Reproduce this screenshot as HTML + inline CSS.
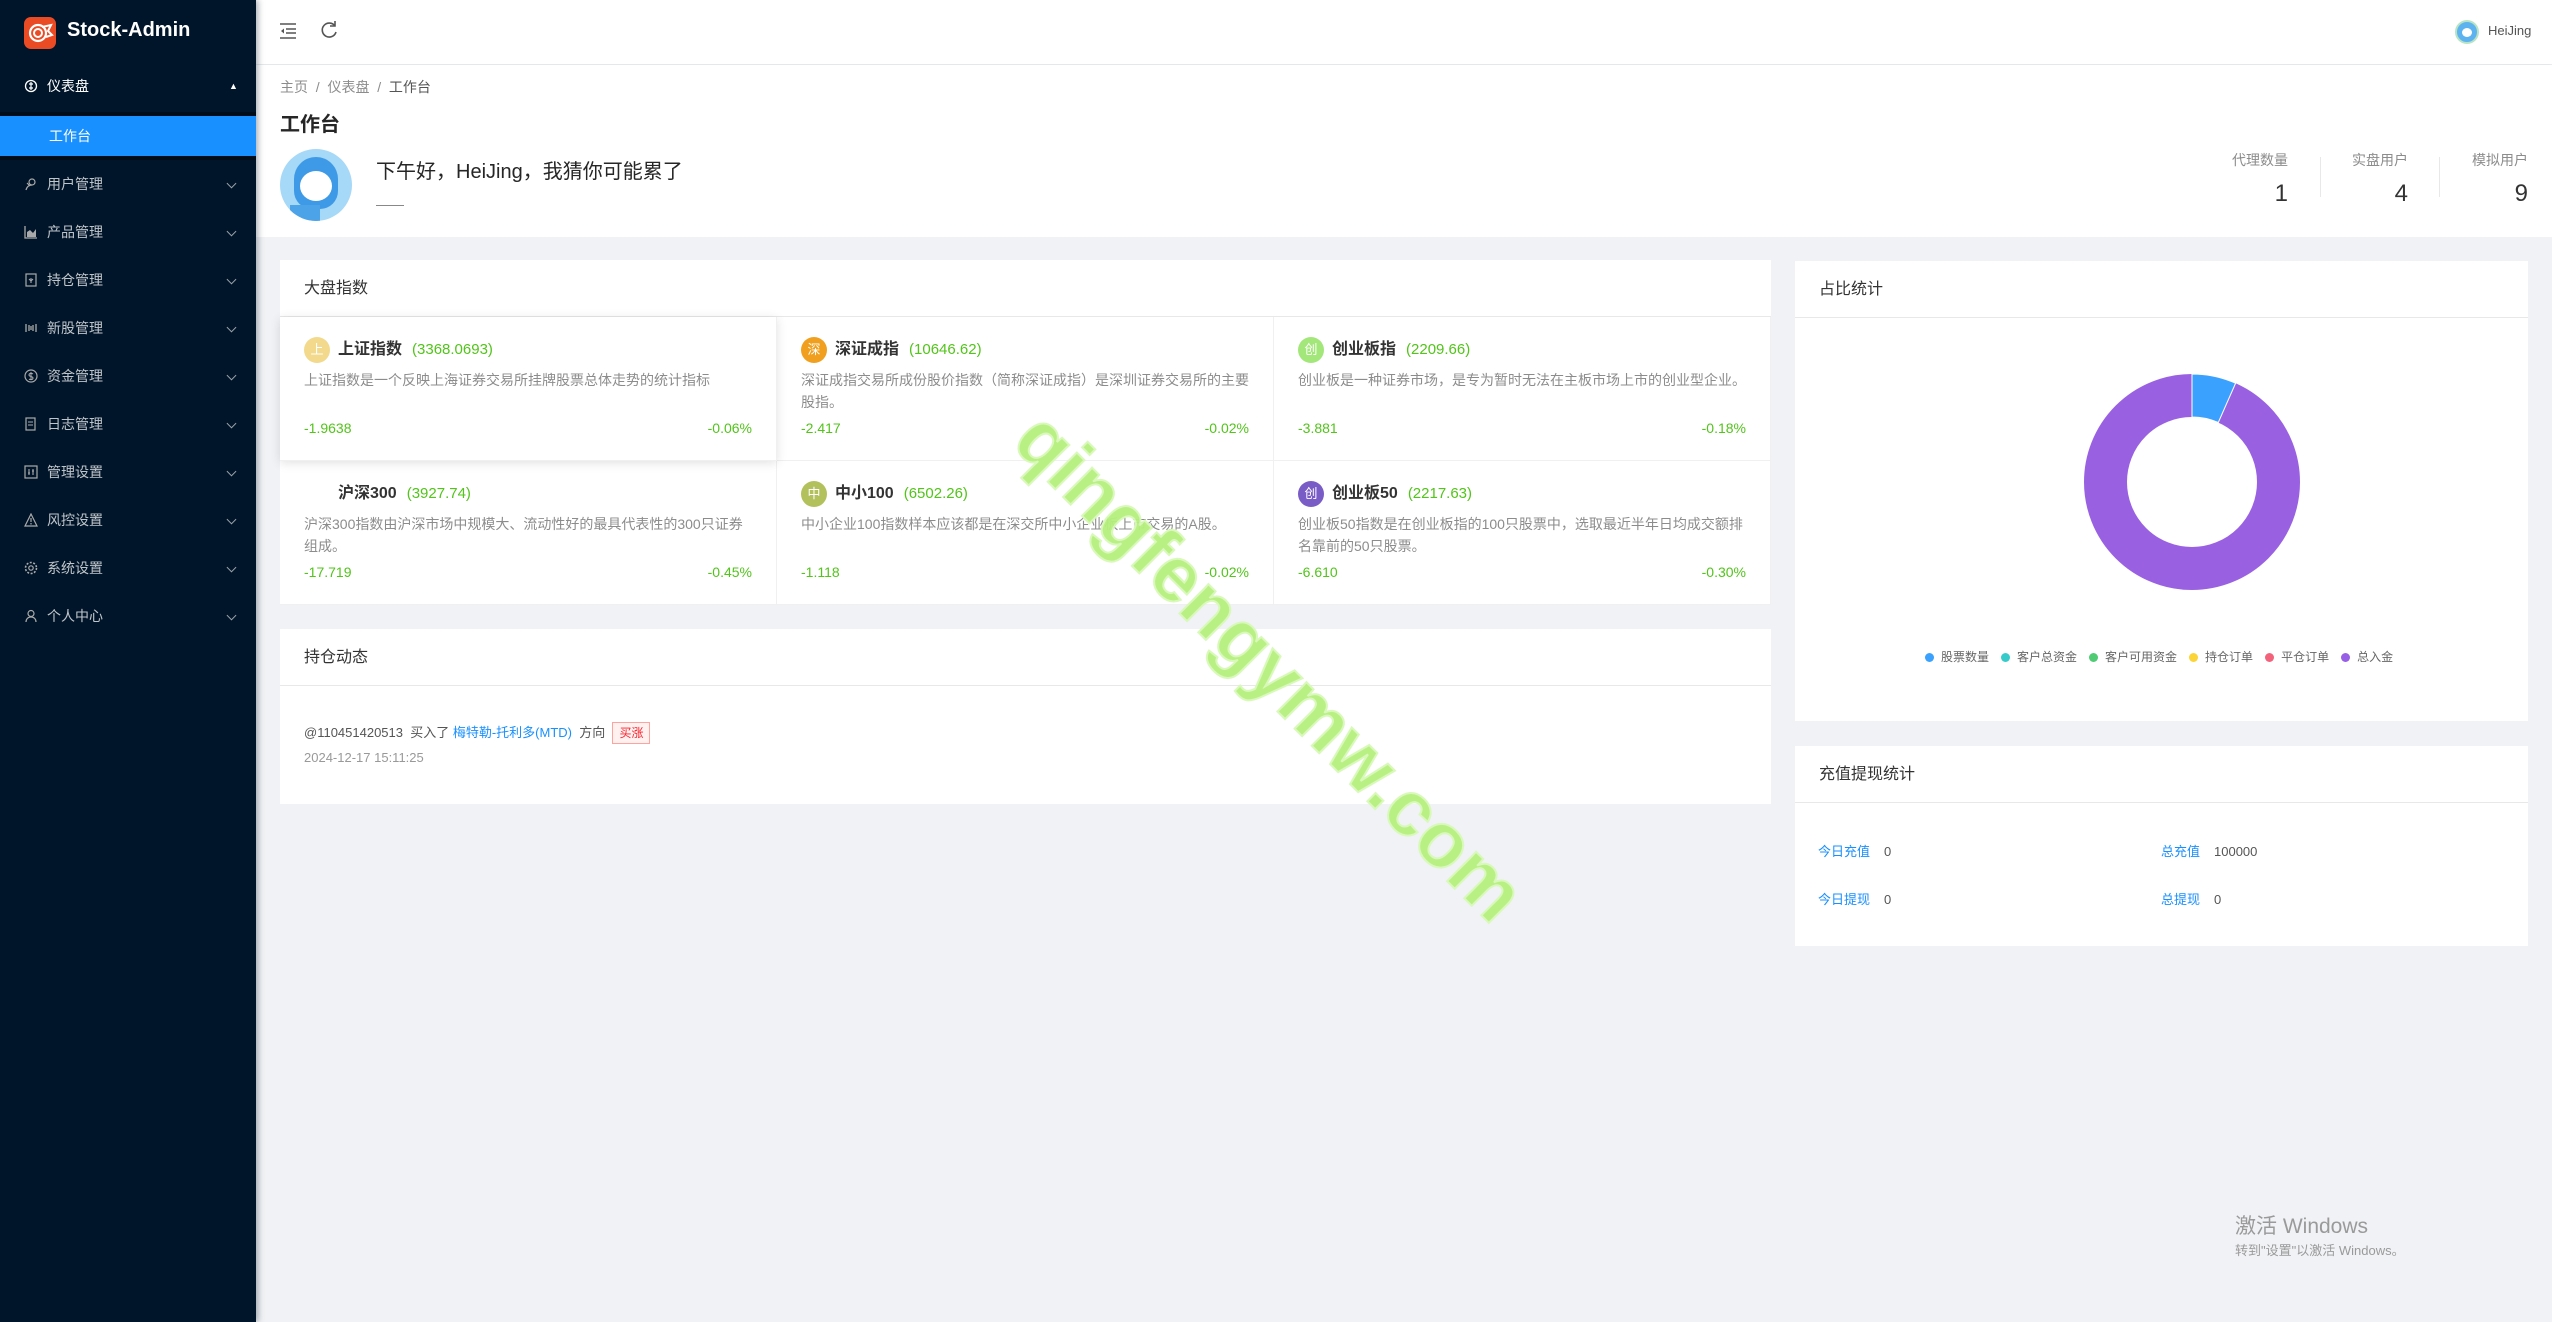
<!DOCTYPE html>
<html><head><meta charset="utf-8">
<style>
*{box-sizing:border-box;margin:0;padding:0}
body{width:2552px;height:1322px;overflow:hidden;background:#f0f2f5;font-family:"Liberation Sans","Noto Sans CJK SC",sans-serif;position:relative;color:#333}
.abs{position:absolute}
#side{left:0;top:0;width:256px;height:1322px;background:#001529;box-shadow:2px 0 6px rgba(0,21,41,.35);z-index:2}
.logo{left:24px;top:17px;width:32px;height:32px;border-radius:7px;background:#ea4b24}
.brand{left:67px;top:19px;color:#fff;font-weight:bold;font-size:20px}
.mi{position:absolute;left:0;width:256px;height:48px;color:rgba(255,255,255,.75);font-size:14px;line-height:48px}
.mi .ic{position:absolute;left:24px;top:17px;width:14px;height:14px}
.mi .t{position:absolute;left:47px}
.mi .ar{position:absolute;left:228px;top:20px;width:7px;height:7px;border-right:1.5px solid rgba(255,255,255,.6);border-bottom:1.5px solid rgba(255,255,255,.6);transform:rotate(45deg)}
.sub{left:0;top:112px;width:256px;height:48px;background:#000c17}
.act{left:0;top:116px;width:256px;height:40px;background:#1890ff;color:#fff;font-size:14px;line-height:40px;padding-left:49px}
#hdr{left:256px;top:0;width:2296px;height:64px;background:#fff;box-shadow:0 1px 4px rgba(0,21,41,.08)}
#ph{left:256px;top:65px;width:2296px;height:172px;background:#fff}
.card{position:absolute;background:#fff}
.ch{position:absolute;left:0;top:0;right:0;height:57px;border-bottom:1px solid #e8e8e8;font-size:16px;line-height:57px;padding-left:24px;color:#333}
.cell{position:absolute;width:497px;height:144px;border-right:1px solid #f0f0f0;border-bottom:1px solid #f0f0f0;background:#fff}
.cell .ci{position:absolute;left:24px;top:20px;width:26px;height:26px;border-radius:50%;color:#fff;font-size:13px;text-align:center;line-height:26px}
.cell .tt{position:absolute;left:58px;top:20px;font-size:16px;font-weight:bold;color:#333;line-height:26px}
.cell .tt span{color:#52c41a;font-weight:normal;font-size:15px;margin-left:10px}
.cell .d{position:absolute;left:24px;top:52px;width:450px;font-size:14px;line-height:22px;color:#8c8c8c}
.cell .n{position:absolute;left:24px;top:103px;font-size:14px;color:#52c41a}
.cell .p{position:absolute;right:24px;top:103px;font-size:14px;color:#52c41a}
.st{position:absolute;text-align:right}
.st .l{font-size:14px;color:#8c8c8c}
.st .v{font-size:24px;color:#333;margin-top:10px}
.lg{display:inline-block;margin-right:12px;font-size:12px;color:#666}
.lg i{display:inline-block;width:9px;height:9px;border-radius:50%;margin-right:7px;vertical-align:-1px}
.rv{position:absolute;font-size:13px}
.rv b{font-weight:normal;color:#1890ff;margin-right:14px}
.rv span{color:#555}
</style></head><body>

<div id="side" class="abs">
  <div class="abs logo"><svg width="32" height="32" viewBox="0 0 32 32"><circle cx="14" cy="16" r="8" fill="none" stroke="#fff" stroke-width="2.2"/><circle cx="14" cy="16" r="4" fill="none" stroke="#fff" stroke-width="2"/><path d="M18 10 L27 8 L24 14 L28 18 L22 20" fill="none" stroke="#fff" stroke-width="2"/></svg></div>
  <div class="abs brand">Stock-Admin</div>
  <div class="mi" style="top:62px;color:#fff"><svg class="ic" viewBox="0 0 14 14"><circle cx="7" cy="7" r="5.5" fill="none" stroke="#fff" stroke-width="1.3"/><path d="M5 5h4M5 9h4M7 3v8" stroke="#fff" stroke-width="1.2"/></svg><span class="t">仪表盘</span><span style="position:absolute;left:229px;top:0;font-size:9px">▲</span></div>
  <div class="abs sub"></div>
  <div class="abs act">工作台</div>
  <div class="mi" style="top:160px"><svg class="ic" viewBox="0 0 14 14"><circle cx="8" cy="5" r="3" fill="none" stroke="#aaa" stroke-width="1.2"/><path d="M2 13c1-4 4-5 6-5M3 6l3 3" stroke="#aaa" stroke-width="1.2" fill="none"/></svg><span class="t">用户管理</span><i class="ar"></i></div>
  <div class="mi" style="top:208px"><svg class="ic" viewBox="0 0 14 14"><path d="M1 1v12h12" stroke="#aaa" stroke-width="1.3" fill="none"/><path d="M3 12V7l3-2 3 3 3-4v8z" fill="#aaa"/></svg><span class="t">产品管理</span><i class="ar"></i></div>
  <div class="mi" style="top:256px"><svg class="ic" viewBox="0 0 14 14"><rect x="2" y="1" width="10" height="12" fill="none" stroke="#aaa" stroke-width="1.2"/><path d="M5 6l2 2 2-2M7 5v5" stroke="#aaa" stroke-width="1.1" fill="none"/></svg><span class="t">持仓管理</span><i class="ar"></i></div>
  <div class="mi" style="top:304px"><svg class="ic" viewBox="0 0 14 14"><path d="M2 3v8M12 3v8M5 4v6M9 4v6M7 5v4" stroke="#aaa" stroke-width="1.3"/></svg><span class="t">新股管理</span><i class="ar"></i></div>
  <div class="mi" style="top:352px"><svg class="ic" viewBox="0 0 14 14"><circle cx="7" cy="7" r="6" fill="none" stroke="#aaa" stroke-width="1.2"/><path d="M9 5c-1-1-4-1-4 1s4 1 4 3-3 2-4 1M7 3v8" stroke="#aaa" stroke-width="1" fill="none"/></svg><span class="t">资金管理</span><i class="ar"></i></div>
  <div class="mi" style="top:400px"><svg class="ic" viewBox="0 0 14 14"><rect x="2" y="1" width="9" height="12" fill="none" stroke="#aaa" stroke-width="1.2"/><path d="M4 5h5M4 8h5" stroke="#aaa" stroke-width="1.1"/></svg><span class="t">日志管理</span><i class="ar"></i></div>
  <div class="mi" style="top:448px"><svg class="ic" viewBox="0 0 14 14"><rect x="1" y="1" width="12" height="12" fill="none" stroke="#aaa" stroke-width="1.2"/><path d="M5 4v6M9 4v6M4 8h2M8 6h2" stroke="#aaa" stroke-width="1.1"/></svg><span class="t">管理设置</span><i class="ar"></i></div>
  <div class="mi" style="top:496px"><svg class="ic" viewBox="0 0 14 14"><path d="M7 1L13 13H1z" fill="none" stroke="#aaa" stroke-width="1.2"/><path d="M7 5v4M7 10v1.5" stroke="#aaa" stroke-width="1.2"/></svg><span class="t">风控设置</span><i class="ar"></i></div>
  <div class="mi" style="top:544px"><svg class="ic" viewBox="0 0 14 14"><circle cx="7" cy="7" r="5.5" fill="none" stroke="#aaa" stroke-width="1.6" stroke-dasharray="2 1.5"/><circle cx="7" cy="7" r="2.2" fill="none" stroke="#aaa" stroke-width="1.2"/></svg><span class="t">系统设置</span><i class="ar"></i></div>
  <div class="mi" style="top:592px"><svg class="ic" viewBox="0 0 14 14"><circle cx="7" cy="4.5" r="3" fill="none" stroke="#aaa" stroke-width="1.2"/><path d="M2 13c0-3 2-5 5-5s5 2 5 5" fill="none" stroke="#aaa" stroke-width="1.2"/></svg><span class="t">个人中心</span><i class="ar"></i></div>
</div>

<div id="hdr" class="abs">
  <svg class="abs" style="left:23px;top:22px" width="18" height="18" viewBox="0 0 18 18"><path d="M1 2h16M7 7h10M7 11h10M1 16h16" stroke="#555" stroke-width="1.5"/><path d="M5 6.5L2 9l3 2.5z" fill="#555"/></svg>
  <svg class="abs" style="left:64px;top:20px" width="18" height="20" viewBox="0 0 18 20"><path d="M15 6A7 7 0 1 0 16 12" fill="none" stroke="#555" stroke-width="1.6"/><path d="M15 1v5h-5" fill="none" stroke="#555" stroke-width="1.6"/></svg>
  <div class="abs" style="left:2199px;top:20px;width:24px;height:24px;border-radius:50%;background:#5db3f0;border:2px solid #b8e4c4"><div style="margin:6px auto;width:10px;height:9px;background:#fff;border-radius:50%"></div></div>
  <div class="abs" style="left:2232px;top:23px;font-size:13px;color:#555">HeiJing</div>
</div>

<div id="ph" class="abs">
  <div class="abs" style="left:24px;top:12px;font-size:14px;color:#8c8c8c">主页 &nbsp;/&nbsp; 仪表盘 &nbsp;/&nbsp; <span style="color:#555">工作台</span></div>
  <div class="abs" style="left:24px;top:43px;font-size:20px;font-weight:bold;color:#262626">工作台</div>
  <div class="abs" style="left:24px;top:84px;width:72px;height:72px;border-radius:50%;background:#a6d8f7;overflow:hidden">
    <div style="position:absolute;left:14px;top:8px;width:44px;height:52px;border-radius:22px 22px 18px 18px;background:#3e9ae6"></div>
    <div style="position:absolute;left:20px;top:22px;width:32px;height:30px;border-radius:50%;background:#fff"></div>
    <div style="position:absolute;left:10px;top:56px;width:30px;height:20px;background:#4ca3e8"></div>
  </div>
  <div class="abs" style="left:120px;top:90px;font-size:20px;color:#262626">下午好，HeiJing，我猜你可能累了</div>
  <div class="abs" style="left:120px;top:140px;width:28px;height:1px;background:#888"></div>
  <div class="st" style="right:264px;top:85px"><div class="l">代理数量</div><div class="v">1</div></div>
  <div class="abs" style="left:2064px;top:92px;width:1px;height:40px;background:#e8e8e8"></div>
  <div class="st" style="right:144px;top:85px"><div class="l">实盘用户</div><div class="v">4</div></div>
  <div class="abs" style="left:2183px;top:92px;width:1px;height:40px;background:#e8e8e8"></div>
  <div class="st" style="right:24px;top:85px"><div class="l">模拟用户</div><div class="v">9</div></div>
</div>

<div class="card" style="left:280px;top:260px;width:1491px;height:345px">
  <div class="ch">大盘指数</div>
  <div class="cell" style="left:994px;top:57px"><div class="ci" style="background:#a3e77a">创</div><div class="tt">创业板指<span>(2209.66)</span></div><div class="d">创业板是一种证券市场，是专为暂时无法在主板市场上市的创业型企业。</div><div class="n">-3.881</div><div class="p">-0.18%</div></div>
  <div class="cell" style="left:497px;top:57px"><div class="ci" style="background:#f0a01e">深</div><div class="tt">深证成指<span>(10646.62)</span></div><div class="d">深证成指交易所成份股价指数（简称深证成指）是深圳证券交易所的主要股指。</div><div class="n">-2.417</div><div class="p">-0.02%</div></div>
  <div class="cell" style="left:0;top:201px"><div class="tt">沪深300<span>(3927.74)</span></div><div class="d">沪深300指数由沪深市场中规模大、流动性好的最具代表性的300只证券组成。</div><div class="n">-17.719</div><div class="p">-0.45%</div></div>
  <div class="cell" style="left:497px;top:201px"><div class="ci" style="background:#b3c15c">中</div><div class="tt">中小100<span>(6502.26)</span></div><div class="d">中小企业100指数样本应该都是在深交所中小企业板上市交易的A股。</div><div class="n">-1.118</div><div class="p">-0.02%</div></div>
  <div class="cell" style="left:994px;top:201px"><div class="ci" style="background:#7a5cc6">创</div><div class="tt">创业板50<span>(2217.63)</span></div><div class="d">创业板50指数是在创业板指的100只股票中，选取最近半年日均成交额排名靠前的50只股票。</div><div class="n">-6.610</div><div class="p">-0.30%</div></div>
  <div class="cell" style="left:0;top:57px;box-shadow:0 2px 10px rgba(0,0,0,.12);z-index:1"><div class="ci" style="background:#f2d98c">上</div><div class="tt">上证指数<span>(3368.0693)</span></div><div class="d">上证指数是一个反映上海证券交易所挂牌股票总体走势的统计指标</div><div class="n">-1.9638</div><div class="p">-0.06%</div></div>
</div>

<div class="card" style="left:280px;top:629px;width:1491px;height:175px">
  <div class="ch">持仓动态</div>
  <div class="abs" style="left:24px;top:93px;font-size:13px;color:#555">@110451420513 &nbsp;买入了 <span style="color:#1890ff">梅特勒-托利多(MTD)</span> &nbsp;方向 &nbsp;<span style="display:inline-block;padding:0 6px;border:1px solid #ffa39e;background:#fff1f0;color:#f5222d;font-size:12px;line-height:20px">买涨</span></div>
  <div class="abs" style="left:24px;top:121px;font-size:13px;color:#999">2024-12-17 15:11:25</div>
</div>

<div class="card" style="left:1795px;top:261px;width:733px;height:460px">
  <div class="ch">占比统计</div>
  <svg class="abs" style="left:289px;top:113px" width="216" height="216" viewBox="-108 -108 216 216">
    <circle r="86.5" fill="none" stroke="#9961e2" stroke-width="43"/>
    <path d="M0 -108 A108 108 0 0 1 43.6 -98.8 L26.3 -59.5 A65 65 0 0 0 0 -65Z" fill="#3ba1ff" stroke="#fff" stroke-width="1"/>
  </svg>
  <div class="abs" style="left:130px;top:387px;white-space:nowrap">
    <span class="lg"><i style="background:#3ba1ff"></i>股票数量</span><span class="lg"><i style="background:#36cbcb"></i>客户总资金</span><span class="lg"><i style="background:#4ecb73"></i>客户可用资金</span><span class="lg"><i style="background:#fbd437"></i>持仓订单</span><span class="lg"><i style="background:#f2637b"></i>平仓订单</span><span class="lg"><i style="background:#975fe5"></i>总入金</span>
  </div>
</div>

<div class="card" style="left:1795px;top:746px;width:733px;height:200px">
  <div class="ch">充值提现统计</div>
  <div class="rv" style="left:23px;top:95px"><b>今日充值</b><span>0</span></div>
  <div class="rv" style="left:366px;top:95px"><b>总充值</b><span>100000</span></div>
  <div class="rv" style="left:23px;top:143px"><b>今日提现</b><span>0</span></div>
  <div class="rv" style="left:366px;top:143px"><b>总提现</b><span>0</span></div>
</div>

<div class="abs" style="left:1270px;top:667px;width:0;height:0;z-index:5">
  <div style="position:absolute;left:-380px;top:-46px;width:760px;text-align:center;transform:rotate(45deg);font-size:78px;font-weight:bold;color:#b6f07e;-webkit-text-stroke:2px #d8f9b8;white-space:nowrap;opacity:.95">qingfengymw.com</div>
</div>

<div class="abs" style="left:2235px;top:1210px;font-size:21px;color:#9a9a9a">激活 Windows</div>
<div class="abs" style="left:2235px;top:1240px;font-size:13px;color:#9a9a9a">转到"设置"以激活 Windows。</div>
</body></html>
